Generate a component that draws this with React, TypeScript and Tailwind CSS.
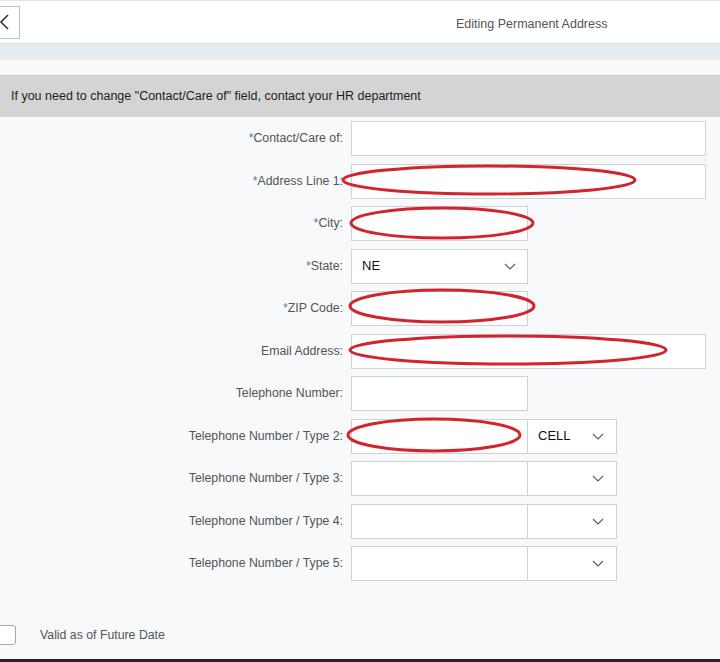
import React from "react";

// Editing Permanent Address — form with red annotation rings overlaid.

const FONT = { fontFamily: '"Liberation Sans", Arial, sans-serif' };

type Row = {
  label: string;
  required?: boolean;
  kind: "wide" | "narrow" | "select" | "phone";
  value?: string;
};

const rows: Row[] = [
  { label: "Contact/Care of:", required: true, kind: "wide" },
  { label: "Address Line 1:", required: true, kind: "wide" },
  { label: "City:", required: true, kind: "narrow" },
  { label: "State:", required: true, kind: "select", value: "NE" },
  { label: "ZIP Code:", required: true, kind: "narrow" },
  { label: "Email Address:", kind: "wide" },
  { label: "Telephone Number:", kind: "narrow" },
  { label: "Telephone Number / Type 2:", kind: "phone", value: "CELL" },
  { label: "Telephone Number / Type 3:", kind: "phone" },
  { label: "Telephone Number / Type 4:", kind: "phone" },
  { label: "Telephone Number / Type 5:", kind: "phone" },
];

function Chevron() {
  return (
    <svg width="12" height="7" viewBox="0 0 12 7" className="shrink-0">
      <polyline points="1,1 6,6 11,1" fill="none" stroke="#5a5a5a" strokeWidth="1.1" />
    </svg>
  );
}

function Field({ row }: { row: Row }) {
  const box = "h-[35px] border border-[#cfd2d4] bg-white";
  if (row.kind === "wide") return <div className={`${box} w-[355px]`} />;
  if (row.kind === "narrow") return <div className={`${box} w-[177px]`} />;
  if (row.kind === "select")
    return (
      <div className={`${box} flex w-[177px] items-center justify-between pl-[10px] pr-[11px]`}>
        <span className="text-[13px] text-[#111]">{row.value}</span>
        <Chevron />
      </div>
    );
  return (
    <div className="flex">
      <div className={`${box} w-[177px]`} />
      <div className={`${box} -ml-px flex w-[90px] items-center justify-between pl-[10px] pr-[12px]`}>
        <span className="text-[13px] text-[#111]">{row.value ?? ""}</span>
        <Chevron />
      </div>
    </div>
  );
}

export default function App() {
  return (
    <div className="relative h-[662px] w-[720px] overflow-hidden bg-[#f7f9fb]" style={FONT}>
      {/* header */}
      <div className="flex h-[43px] items-center border-t border-[#e4e6e8] bg-white">
        <button
          type="button"
          className="-ml-[12px] flex h-[33px] w-[32px] items-center justify-end border border-[#b4c6d4] bg-white pr-[10px]"
        >
          <svg width="10" height="16" viewBox="0 0 10 16">
            <polyline points="9,1 2,8 9,15" fill="none" stroke="#3a3a3a" strokeWidth="1.6" />
          </svg>
        </button>
        <div className="ml-[436px] pt-[4px] text-[12.5px] text-[#555]">Editing Permanent Address</div>
      </div>
      <div className="h-[17px] border-t border-[#dde2e6] bg-[#e6ebef]" />
      <div className="h-[15px] bg-[#f7f9fb]" />
      <div className="flex h-[42px] items-center border-t border-[#c9c9c9] bg-[#d4d4d4] pl-[11px] text-[12.5px] text-[#1d1d1d]">
        If you need to change "Contact/Care of" field, contact your HR department
      </div>

      {/* form */}
      <div className="flex flex-col gap-[7.5px] pt-[4px]">
        {rows.map((row) => (
          <div key={row.label} className="flex items-center">
            <div className="w-[344px] pr-[1px] text-right text-[12.3px] text-[#555]">
              {row.required ? <span className="text-[#3f7fbf]">*</span> : null}
              {row.label}
            </div>
            <div className="ml-[7px]">
              <Field row={row} />
            </div>
          </div>
        ))}
      </div>

      {/* future date */}
      <div className="mt-[44px] flex items-center">
        <div className="-ml-[5px] h-[20px] w-[21px] rounded-[3px] border border-[#a9a9a9] bg-white" />
        <span className="ml-[24px] text-[12.3px] text-[#555]">Valid as of Future Date</span>
      </div>

      <div className="absolute bottom-0 left-0 h-[3px] w-full bg-[#262626]" />

      {/* annotation rings */}
      <svg className="pointer-events-none absolute left-0 top-0" width="720" height="662">
        <g fill="none" stroke="#d3232c" strokeWidth="3">
          <ellipse cx="489" cy="180" rx="146" ry="14" />
          <ellipse cx="442" cy="223" rx="91" ry="15" />
          <ellipse cx="442" cy="306" rx="92" ry="16" />
          <ellipse cx="508" cy="350" rx="158" ry="14" />
          <ellipse cx="434" cy="435" rx="86" ry="16" />
        </g>
      </svg>
    </div>
  );
}
